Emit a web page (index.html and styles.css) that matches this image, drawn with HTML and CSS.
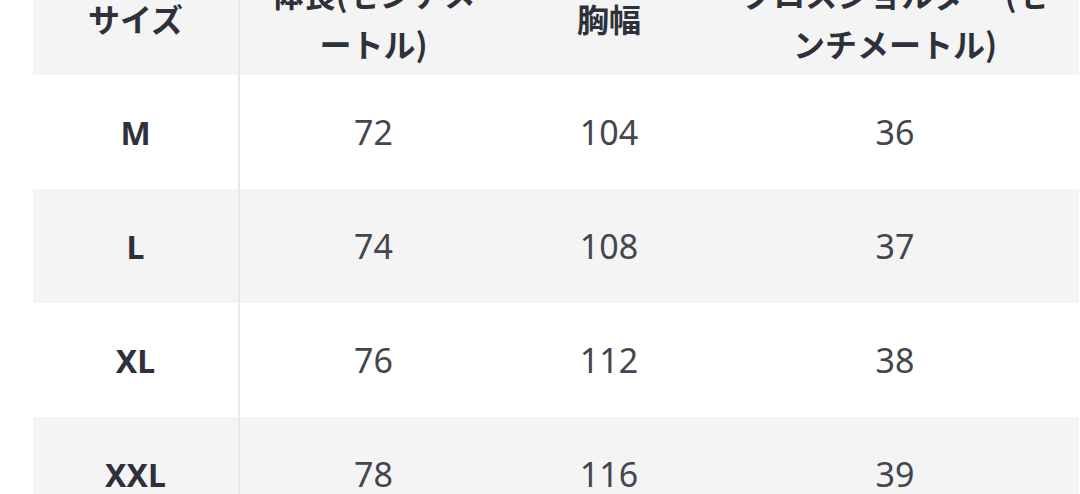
FILE: index.html
```html
<!DOCTYPE html>
<html lang="ja">
<head>
<meta charset="utf-8">
<title>サイズ表</title>
<link rel="stylesheet" href="styles.css">
</head>
<body>
<div class="frame">
  <table class="size-table">
    <colgroup>
      <col class="c-size">
      <col class="c-length">
      <col class="c-chest">
      <col class="c-shoulder">
    </colgroup>
    <thead>
      <tr class="row-grey">
        <th class="first">サイズ</th>
        <th class="len-head">体長(センチメートル)</th>
        <th>胸幅</th>
        <th class="sh-head">クロスショルダー (センチメートル)</th>
      </tr>
    </thead>
    <tbody>
      <tr class="row-white">
        <th class="first">M</th><td>72</td><td>104</td><td>36</td>
      </tr>
      <tr class="row-grey">
        <th class="first">L</th><td>74</td><td>108</td><td>37</td>
      </tr>
      <tr class="row-white">
        <th class="first">XL</th><td>76</td><td>112</td><td>38</td>
      </tr>
      <tr class="row-grey">
        <th class="first">XXL</th><td>78</td><td>116</td><td>39</td>
      </tr>
    </tbody>
  </table>
</div>
</body>
</html>
```

FILE: styles.css
```css
html, body {
  margin: 0;
  padding: 0;
  background: #ffffff;
}

.frame {
  width: 1080px;
  height: 494px;
  overflow: hidden;
  padding-left: 33px;
  box-sizing: border-box;
}

.size-table {
  margin-top: -39px;
  border-collapse: collapse;
  table-layout: fixed;
  width: 1046px;
  font-family: "Noto Sans", "Open Sans", "Noto Sans CJK JP", sans-serif;
  color: #3f424b;
}

.c-size { width: 206px; }
.c-length { width: 268px; }
.c-chest { width: 204px; }
.c-shoulder { width: 368px; }

.size-table th,
.size-table td {
  height: 114px;
  padding: 0 20px;
  text-align: center;
  vertical-align: middle;
  box-sizing: border-box;
}

.size-table thead th {
  font-family: "Noto Sans CJK JP", "Noto Sans", sans-serif;
  font-weight: 700;
  font-size: 32px;
  line-height: 50px;
  color: #2e313a;
}

.size-table tbody th {
  font-weight: 700;
  font-size: 32px;
  color: #2e313a;
}

.size-table td {
  font-weight: 400;
  font-size: 34px;
  color: #44464e;
}

.size-table .first {
  border-right: 2px solid #e9e9eb;
}

.len-head { padding: 0 24px; }
.sh-head { padding: 0 14px; }

.row-grey th,
.row-grey td {
  background: #f4f4f5;
}

.row-white th,
.row-white td {
  background: #ffffff;
}
```
